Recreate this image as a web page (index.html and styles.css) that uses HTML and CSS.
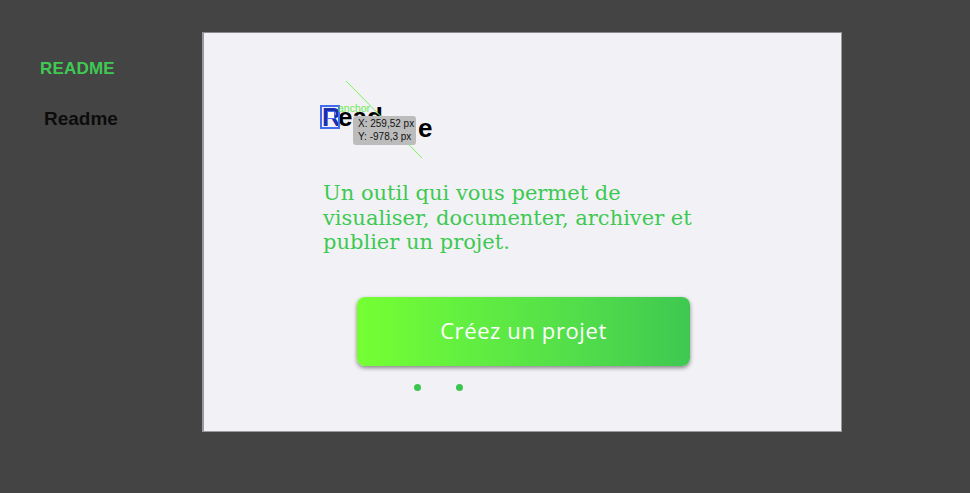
FILE: index.html
```html
<!DOCTYPE html>
<html lang="fr">
<head>
<meta charset="utf-8">
<title>Readme</title>
<link rel="stylesheet" href="styles.css">
</head>
<body>
<div class="app">
  <aside class="side">
    <div class="side-brand">README</div>
    <div class="side-title">Readme</div>
  </aside>
  <main class="frame">
    <div class="content">
      <div class="title-wrap">
        <h1 class="title"><span class="r-sel">R</span>ead<span class="hid">m</span><span class="drag">e</span></h1>
        <span class="anchor">anchor</span>
        <svg class="guide" width="80" height="80" viewBox="0 0 80 80"><line x1="0" y1="0" x2="76" y2="77" stroke="#7cf25a" stroke-width="1"/></svg>
        <div class="tip"><div>X: 259,52 px</div><div>Y: -978,3 px</div></div>
      </div>
      <p class="lead">Un outil qui vous permet de visualiser, documenter, archiver et publier un projet.</p>
      <button class="cta">Créez un projet</button>
      <div class="dots"><span class="dot"></span><span class="dot"></span></div>
    </div>
  </main>
</div>
</body>
</html>
```
FILE: styles.css
```css
html, body { margin: 0; padding: 0; }
body { background: #444444; width: 970px; height: 493px; overflow: hidden; font-family: "Liberation Sans", Arial, sans-serif; }
.app { display: flex; padding-top: 32px; }
.side { width: 202px; display: flex; flex-direction: column; }
.side-brand { color: #3fc953; font-weight: bold; font-size: 17px; margin: 27px 0 0 40px; line-height: 20px; letter-spacing: 0.2px; }
.side-title { color: #0c0c0c; font-weight: bold; font-size: 19px; margin: 29px 0 0 44px; line-height: 22px; }
.frame { width: 637px; height: 398px; background: #f2f2f6; border-left: 2px solid #9a9a9a; border-top: 1px solid #8a8a8a; border-right: 1px solid #9a9a9a; border-bottom: 1px solid #9a9a9a; }
.content { padding: 0 0 0 119px; display: flex; flex-direction: column; }
.title-wrap { position: relative; height: 140px; }
.title { margin: 0; position: absolute; left: -1px; top: 69px; font-size: 26px; font-weight: bold; line-height: 30px; color: #000; font-family: "Liberation Sans", Arial, sans-serif; white-space: nowrap; }
.r-sel { display: inline-block; width: 16px; height: 20px; line-height: 20px; color: #1b2fae; outline: 2px solid #3f6cf0; outline-offset: 0; position: relative; }
.r-sel::after { content: ""; position: absolute; left: 5px; top: 4px; width: 6px; height: 6px; background: #fff; border: 1px solid #3f6cf0; }
.hid { color: transparent; }
.drag { display: inline-block; transform: translate(12px, 11px); }
.anchor { position: absolute; left: 15px; top: 70px; font-size: 10.5px; color: #6ee853; line-height: 11px; }
.guide { position: absolute; left: 23px; top: 48px; }
.tip { position: absolute; left: 30px; top: 83px; width: 63px; height: 29px; border-radius: 3px; background: #bcbcbc; font-size: 10px; line-height: 12.5px; color: #111; padding: 2px 0 0 5px; box-sizing: border-box; white-space: nowrap; }
.lead { margin: 8px 0 0 0; width: 400px; font-family: "DejaVu Serif", "Liberation Serif", serif; font-size: 21px; line-height: 24.5px; color: #3ec952; }
.cta { margin: 42px 0 0 34px; width: 333px; height: 69px; border: none; border-radius: 8px; background: linear-gradient(90deg, #75ff33 0%, #64f03f 30%, #50db4c 70%, #3fc850 100%); box-shadow: 0 2px 4px rgba(0,0,0,0.45); color: #fff; font-family: "Open Sans", sans-serif; font-size: 22px; letter-spacing: 0.6px; padding: 0 0 3px 0; }
.dots { display: flex; gap: 35px; margin: 18px 0 0 91px; }
.dot { width: 7px; height: 7px; border-radius: 50%; background: #3dc552; }
```
